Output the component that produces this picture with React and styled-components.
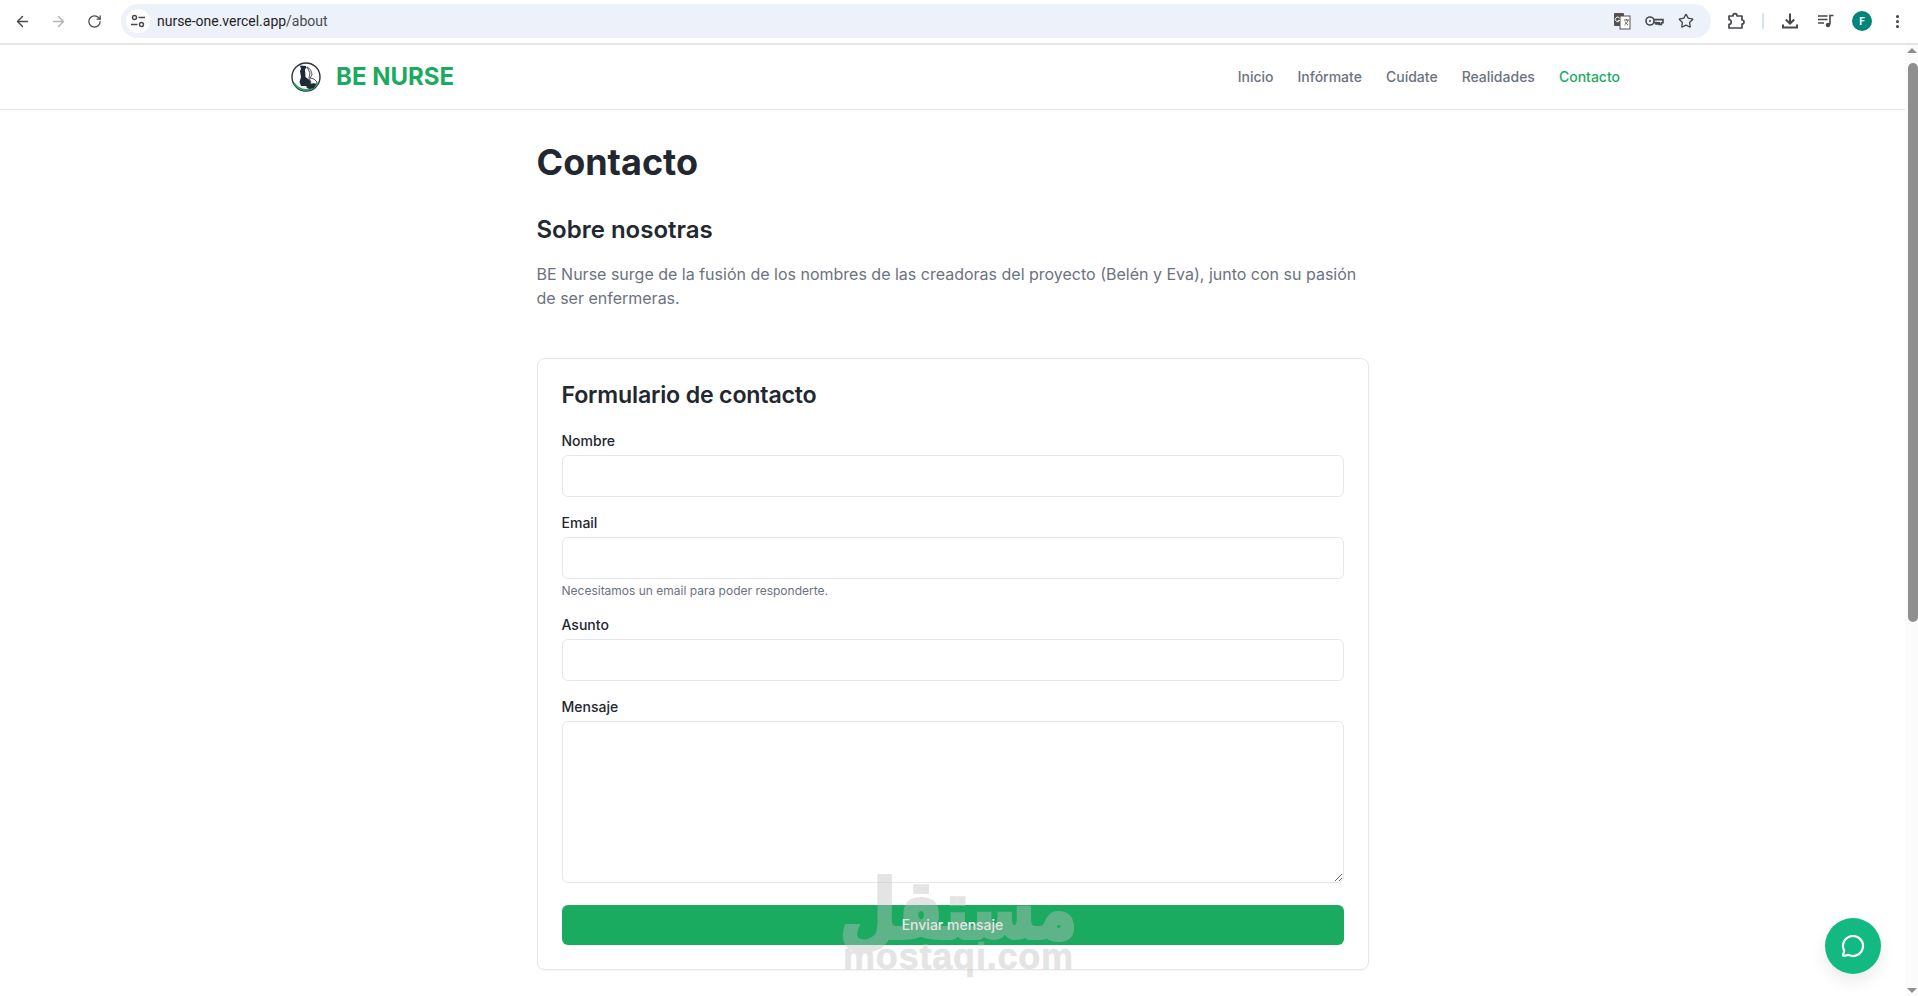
import React from "react";
import styled, { createGlobalStyle } from "styled-components";
import { ArrowLeft, ArrowRight, RotateCw, Star, MoreVertical, MessageCircle } from "lucide-react";

const Global = createGlobalStyle`
  html, body { margin: 0; padding: 0; height: 100%; overflow: hidden; background: #fff; }
  * { box-sizing: border-box; }
  body { font-family: Inter, "Noto Sans", sans-serif; }
`;
const Page = styled.div`position: relative; width: 1918px; height: 996px; display: flex; flex-direction: column; overflow: hidden;`;
const Toolbar = styled.div`height: 45px; flex: none; display: flex; align-items: center; padding: 0 0 1px 11px; border-bottom: 2px solid #e3e5e8; background: #fff;`;
const NavIcons = styled.div`display: flex; align-items: center; gap: 14px; width: 101px;`;
const IconBtn = styled.span`display: inline-flex; flex: none; width: 22px; height: 22px; align-items: center; justify-content: center; color: ${p => p.$c || "#47474c"}; margin-left: ${p => p.$ml || 0}px;`;
const Omnibox = styled.div`width: 1590px; height: 34px; border-radius: 17px; background: #ecf1fa; display: flex; align-items: center; padding: 0 14px 0 5px; margin-left: 9px;`;
const SiteChip = styled.span`width: 24px; height: 24px; border-radius: 50%; background: #fff; display: inline-flex; align-items: center; justify-content: center; margin-right: 7px;`;
const Url = styled.span`flex: 1; font: 14px Roboto, sans-serif; letter-spacing: -.02px; color: #1f1f1f; span { color: #4a4a4f; }`;
const Tools = styled.div`display: flex; align-items: center; gap: 10px;`;
const ExtIcons = styled.div`display: flex; align-items: center; margin-left: 14px;`;
const Sep = styled.span`width: 2px; height: 16px; background: #cfe6f6; margin: 0 15px 0 15px;`;
const Avatar = styled.span`width: 20px; height: 20px; flex: none; margin-left: 15px; border-radius: 50%; background: #008577; color: #fff; font: 700 10px Roboto, sans-serif; display: inline-flex; align-items: center; justify-content: center;`;

const Body = styled.div`flex: 1; display: flex; min-height: 0;`;
const Main = styled.div`flex: 1; min-width: 0; overflow: hidden;`;
const Scrollbar = styled.div`width: 13px; flex: none; background: #fbfbfb; display: flex; flex-direction: column; align-items: center; justify-content: space-between; position: relative; padding: 3px 0;`;
const ScrollThumb = styled.div`position: absolute; left: 3px; top: 18px; width: 10px; height: 559px; background: #8f8f8f; border-radius: 5px;`;
const Arrow = styled.div`width: 0; height: 0; border-left: 5px solid transparent; border-right: 5px solid transparent; ${p => p.$up ? "border-bottom: 5px solid #8f8f8f;" : "border-top: 5px solid #8f8f8f;"}`;

const Header = styled.header`height: 65px; border-bottom: 1px solid #e5e7eb; display: flex; align-items: center; justify-content: space-between; padding: 0 285px 1px 290px;`;
const Brand = styled.div`display: flex; align-items: center; gap: 14px;`;
const BrandName = styled.span`font-size: 24px; font-weight: 700; color: #1aab60;`;
const Nav = styled.nav`display: flex; gap: 24px;`;
const NavLink = styled.a`font-size: 14px; font-weight: 500; color: ${p => p.$active ? "#1aab60" : "#6b7280"};`;

const Content = styled.main`width: 832px; margin: 0 auto;`;
const Title = styled.h1`margin: 27px 0 0; font-size: 36px; line-height: 50px; font-weight: 700; color: #23272f;`;
const Subtitle = styled.h2`margin: 27px 0 0; font-size: 24px; line-height: 32px; font-weight: 600; color: #23272f;`;
const Lead = styled.p`margin: 16px 0 0; font-size: 16px; line-height: 24px; color: #6b7280;`;
const Card = styled.section`margin-top: 48px; height: 612px; border: 1px solid #e5e7eb; border-radius: 8px; padding: 20px 24px 24px; box-shadow: 0 1px 2px rgba(0,0,0,.05);`;
const CardTitle = styled.h3`margin: 0 0 20px; font-size: 23.2px; line-height: 32px; font-weight: 600; color: #23272f; letter-spacing: -.2px;`;
const Field = styled.div`margin-bottom: 16px;`;
const Label = styled.label`display: block; font-size: 14px; line-height: 20px; font-weight: 500; color: #23272f; margin-bottom: 4px;`;
const Input = styled.input`display: block; width: 100%; height: 42px; border: 1px solid #e5e7eb; border-radius: 6px; background: #fff; outline: none;`;
const Area = styled.textarea`display: block; width: 100%; height: 162px; border: 1px solid #e5e7eb; border-radius: 6px; background: #fff; outline: none; resize: vertical;`;
const Hint = styled.small`display: block; font-size: 12px; line-height: 16px; color: #6b7280; margin: 4px 0 0;`;
const Submit = styled.button`display: block; width: 100%; height: 40px; margin-top: 22px; padding: 0 0 2px; border: 0; border-radius: 6px; background: #1aab60; color: #fff; font: 500 14px Inter, sans-serif;`;

const Fab = styled.button`position: absolute; left: 1825px; top: 918px; width: 56px; height: 56px; border-radius: 50%; border: 0; background: #12b981; color: #fff; display: flex; align-items: center; justify-content: center; box-shadow: 0 8px 16px rgba(0,0,0,.08);`;
const Watermark = styled.div`position: absolute; left: 843px; top: 884px; width: 231px; display: flex; flex-direction: column; align-items: center; pointer-events: none; color: #bfbfbf; opacity: .42;`;
const WmArabic = styled.span`font: 700 65px/52px "DejaVu Sans", sans-serif; direction: rtl; white-space: nowrap; -webkit-text-stroke: 3px #bfbfbf; transform: scaleY(1.25);`;
const WmLatin = styled.span`font: 700 36px/36px "Liberation Sans", Arial, sans-serif; letter-spacing: .8px; margin-top: 3px; -webkit-text-stroke: .6px #bfbfbf;`;

const Logo = () => (
  <svg width="32" height="32" viewBox="0 0 32 32">
    <circle cx="16" cy="16" r="14" fill="#fff" stroke="#2f3338" strokeWidth="1.4" />
    <path d="M4 22a14 14 0 0 0 24 0" fill="none" stroke="#2aa56c" strokeWidth="1.6" />
    <path d="M10 4.500l6 .5 .5 2-1.500 1 .5 8 4 3 1.500 3 -3 3h-7l-1.500-4 1.500-5-1-6 1-2z" fill="#1e2a36" />
    <path d="M17 6c3 1 5 5 5 8l-2 3 4 1 3 3-3 5h-6l3-5-2-4 1-5z" fill="none" stroke="#3a4048" strokeWidth=".9" />
    <path d="M16 26c2-3 8-5 10-3l-2 4-5 1z" fill="#1e2a36" />
  </svg>
);
const Tune = () => (
  <svg width="16" height="16" viewBox="0 0 16 16" fill="none" stroke="#47474c" strokeWidth="1.4">
    <circle cx="4.5" cy="4.5" r="2" /><path d="M8.500 4.500H15M1 11.500h6.500" /><circle cx="11.500" cy="11.500" r="2" />
  </svg>
);
const Translate = () => (
  <svg width="18" height="18" viewBox="0 0 18 18">
    <rect x="1" y="1" width="10" height="13" rx="1" fill="#55504f" />
    <rect x="7" y="4" width="10" height="13" fill="#fff" stroke="#55504f" strokeWidth="1" />
    <path d="M11 8h5M13.500 7v1M15 8c-.5 2-2 4-3.500 5M12 9.500c.5 1.300 1.500 2.600 3 3.500" fill="none" stroke="#55504f" strokeWidth=".9" />
    <path d="M6.500 6a2.300 2.300 0 1 0 .2 2.400H4.800" fill="none" stroke="#fff" strokeWidth="1" />
  </svg>
);
const KeyIcon = () => (
  <svg width="19" height="12" viewBox="0 0 19 12" fill="none" stroke="#47474c" strokeWidth="1.6">
    <circle cx="5" cy="6" r="4" />
    <circle cx="5" cy="6" r="1" fill="#47474c" stroke="none" />
    <path d="M9 4.600h9v3.200h-1.600v1.600h-2.200V7.800h-1.600v1.200H11V7.600H9" />
  </svg>
);
const ExtIcon = () => (
  <svg width="18" height="18" viewBox="0 0 18 18" fill="none" stroke="#47474c" strokeWidth="1.7" strokeLinejoin="round">
    <path d="M2 4h4c0-1.200.7-2.400 2-2.400S10 2.800 10 4h5v4c1.200 0 2 .8 2 2s-.8 2-2 2v4H2v-3.600c1.300 0 2.200-1 2.200-2.400S3.300 7.600 2 7.600z" />
  </svg>
);
const DownloadIcon = () => (
  <svg width="18" height="18" viewBox="0 0 18 18" fill="none" stroke="#47474c" strokeWidth="2">
    <path d="M9 1.500v9.500M4.800 7.500L9 11.500l4.200-4M2 12.500v3h14v-3" />
  </svg>
);
const QueueIcon = () => (
  <svg width="16" height="14" viewBox="0 0 16 14" fill="none" stroke="#47474c" strokeWidth="1.600">
    <path d="M0 2h9.500M0 5.500h9.500M0 9h6" />
    <path d="M12 10.500V1.500h3.500" />
    <circle cx="10" cy="11" r="2.200" fill="#47474c" stroke="none" />
  </svg>
);

const Form = ({ label, hint, area }) => (
  <Field>
    <Label>{label}</Label>
    {area ? <Area /> : <Input />}
    {hint && <Hint>{hint}</Hint>}
  </Field>
);

export default function App() {
  return (
    <Page>
      <Global />
      <Toolbar>
        <NavIcons>
          <IconBtn><ArrowLeft size={17} strokeWidth={2} /></IconBtn>
          <IconBtn $c="#b3b3b6"><ArrowRight size={17} strokeWidth={2} /></IconBtn>
          <IconBtn><RotateCw size={15} strokeWidth={2} /></IconBtn>
        </NavIcons>
        <Omnibox>
          <SiteChip><Tune /></SiteChip>
          <Url>nurse-one.vercel.app<span>/about</span></Url>
          <Tools>
            <IconBtn><Translate /></IconBtn>
            <IconBtn><KeyIcon /></IconBtn>
            <IconBtn><Star size={16} strokeWidth={2} /></IconBtn>
          </Tools>
        </Omnibox>
        <ExtIcons>
          <IconBtn><ExtIcon /></IconBtn>
          <Sep />
          <IconBtn><DownloadIcon /></IconBtn>
          <IconBtn $ml={14}><QueueIcon /></IconBtn>
          <Avatar>F</Avatar>
          <IconBtn $ml={14}><MoreVertical size={17} strokeWidth={2.4} /></IconBtn>
        </ExtIcons>
      </Toolbar>
      <Body>
        <Main>
          <Header>
            <Brand>
              <Logo />
              <BrandName>BE NURSE</BrandName>
            </Brand>
            <Nav>
              <NavLink>Inicio</NavLink>
              <NavLink>Infórmate</NavLink>
              <NavLink>Cuídate</NavLink>
              <NavLink>Realidades</NavLink>
              <NavLink $active>Contacto</NavLink>
            </Nav>
          </Header>
          <Content>
            <Title>Contacto</Title>
            <Subtitle>Sobre nosotras</Subtitle>
            <Lead>BE Nurse surge de la fusión de los nombres de las creadoras del proyecto (Belén y Eva), junto con su pasión de ser enfermeras.</Lead>
            <Card>
              <CardTitle>Formulario de contacto</CardTitle>
              <Form label="Nombre" />
              <Form label="Email" hint="Necesitamos un email para poder responderte." />
              <Form label="Asunto" />
              <Form label="Mensaje" area />
              <Submit>Enviar mensaje</Submit>
            </Card>
          </Content>
        </Main>
        <Scrollbar>
          <Arrow $up />
          <ScrollThumb />
          <Arrow />
        </Scrollbar>
      </Body>
      <Watermark>
        <WmArabic>مستقل</WmArabic>
        <WmLatin>mostaqi.com</WmLatin>
      </Watermark>
      <Fab><MessageCircle size={24} strokeWidth={2.2} /></Fab>
    </Page>
  );
}
